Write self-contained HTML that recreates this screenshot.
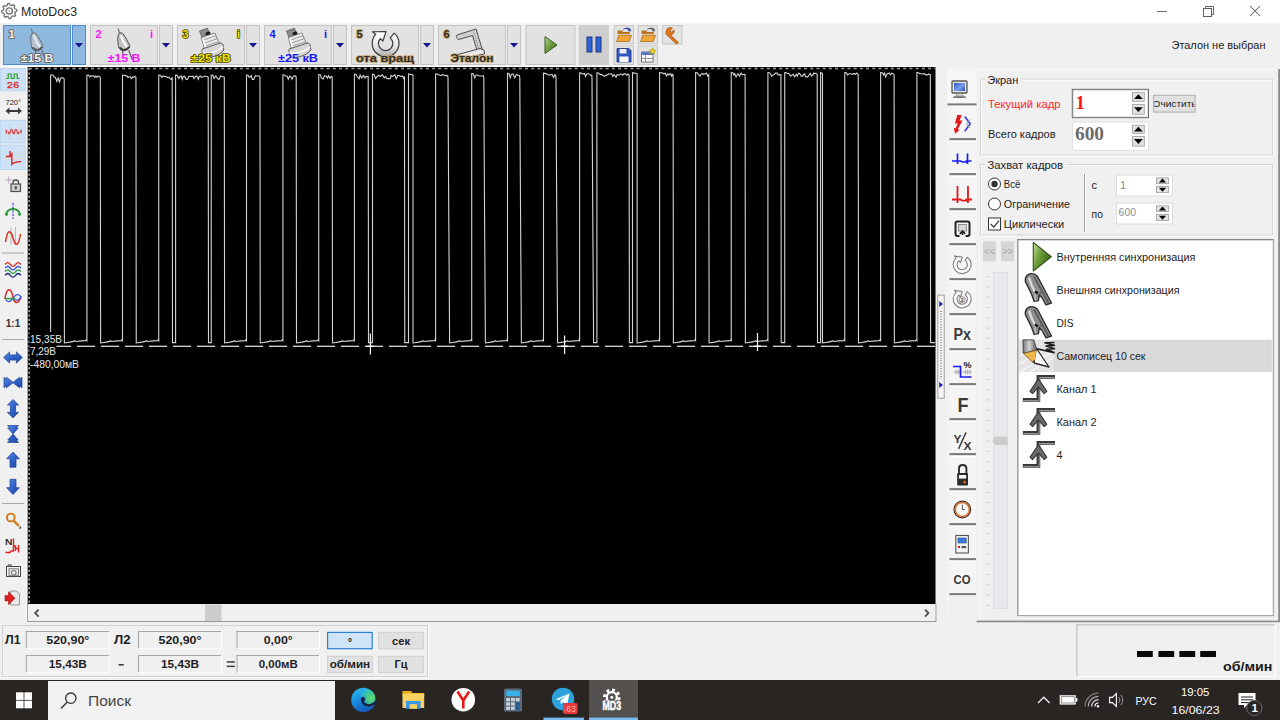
<!DOCTYPE html>
<html lang="ru"><head><meta charset="utf-8"><title>MotoDoc3</title>
<style>
html,body{margin:0;padding:0;width:1280px;height:720px;overflow:hidden;background:#f0f0f0;}
svg{display:block;position:absolute;left:0;top:0;}
text{white-space:pre;}
</style></head><body>
<svg width="1280" height="720" viewBox="0 0 1280 720">
<rect x="0" y="0" width="1280" height="23.3" fill="#ffffff" />
<path d="M16.75,9.52 L16.90,11.00 L15.09,12.15 L14.75,13.26 L15.62,15.22 L14.67,16.37 L12.58,15.91 L11.56,16.45 L10.78,18.45 L9.30,18.60 L8.15,16.79 L7.04,16.45 L5.08,17.32 L3.93,16.37 L4.39,14.28 L3.85,13.26 L1.85,12.48 L1.70,11.00 L3.51,9.85 L3.85,8.74 L2.98,6.78 L3.93,5.63 L6.02,6.09 L7.04,5.55 L7.82,3.55 L9.30,3.40 L10.45,5.21 L11.56,5.55 L13.52,4.68 L14.67,5.63 L14.21,7.72 L14.75,8.74Z" fill="#fff" stroke="#707070" stroke-width="1.3" stroke-linejoin="round"/>
<circle cx="9.3" cy="11" r="3.1" fill="#fff" stroke="#707070" stroke-width="1.3"/>
<circle cx="9.3" cy="11" r="1" fill="#b0b0b0"/>
<text x="21" y="16" font-family="'Liberation Sans', sans-serif" font-size="12" fill="#262626" textLength="56" lengthAdjust="spacingAndGlyphs" >MotoDoc3</text>
<line x1="1157" y1="11.5" x2="1167" y2="11.5" stroke="#707070" stroke-width="1" />
<rect x="1203.5" y="8.5" width="8" height="8" fill="none" stroke="#606060" stroke-width="1" />
<path d="M1205.5,8.5 V6.5 H1213.5 V14.5 H1211.5" fill="none" stroke="#606060" stroke-width="1" />
<path d="M1250,6 L1260,16 M1260,6 L1250,16" fill="none" stroke="#606060" stroke-width="1.05" />
<rect x="0" y="23.3" width="1280" height="43" fill="#f0f0f0" />
<rect x="3.5" y="25.5" width="67" height="39" fill="#8fb8de" stroke="#4d8bc9" stroke-width="1" />
<rect x="72.5" y="25.5" width="13" height="39" fill="#8fb8de" stroke="#4d8bc9" stroke-width="1" />
<path d="M75,43 h8 l-4,4.6Z" fill="#14148c" />
<g transform="translate(3,0)" opacity="0.75">
<path d="M28.3,28.7 L29.6,33.6" fill="none" stroke="#555" stroke-width="1" />
<path d="M29.3,33.3 C27.5,35 27.6,40 28.3,45.2 C28.5,47 29,48.2 29.7,48.8 C32,51.8 36.5,51.2 38.8,48 C40,47 40,46 39.5,45.2 C38.5,42.5 35.5,37 33.2,34 C32,32.6 30,32.6 29.3,33.3Z" fill="#c4c4c4" stroke="#4a4a4a" stroke-width="1" />
<path d="M31.2,36 C32,39.5 33.8,43 36.4,46.2" fill="none" stroke="#fff" stroke-width="2.2" stroke-linecap="round"/>
<path d="M29.5,47.2 C31.5,50.8 37,50.6 39.4,46.8" fill="none" stroke="#3a3a3a" stroke-width="1.8" />
<path d="M32.5,51 L33,54 M38.8,50.2 L42.2,59.4" fill="none" stroke="#555" stroke-width="1.2" />
</g>
<text x="8.5" y="37.5" font-family="'Liberation Sans', sans-serif" font-size="11" fill="#f4f4f4" font-weight="bold" stroke="#5a5a5a" stroke-width="1.6" paint-order="stroke" stroke-linejoin="round">1</text>
<text x="20.75" y="62.3" font-family="'Liberation Sans', sans-serif" font-size="11" fill="#f4f4f4" font-weight="bold" textLength="32.5" lengthAdjust="spacingAndGlyphs" stroke="#5a5a5a" stroke-width="1.6" paint-order="stroke" stroke-linejoin="round">±15 В</text>
<rect x="90.5" y="25.5" width="67" height="39" fill="#e2e2e2" stroke="#c4c4c4" stroke-width="1" />
<rect x="159.5" y="25.5" width="13" height="39" fill="#e2e2e2" stroke="#c4c4c4" stroke-width="1" />
<path d="M162,43 h8 l-4,4.6Z" fill="#14148c" />
<g transform="translate(90,0)" opacity="1.0">
<path d="M28.3,28.7 L29.6,33.6" fill="none" stroke="#555" stroke-width="1" />
<path d="M29.3,33.3 C27.5,35 27.6,40 28.3,45.2 C28.5,47 29,48.2 29.7,48.8 C32,51.8 36.5,51.2 38.8,48 C40,47 40,46 39.5,45.2 C38.5,42.5 35.5,37 33.2,34 C32,32.6 30,32.6 29.3,33.3Z" fill="#c4c4c4" stroke="#4a4a4a" stroke-width="1" />
<path d="M31.2,36 C32,39.5 33.8,43 36.4,46.2" fill="none" stroke="#fff" stroke-width="2.2" stroke-linecap="round"/>
<path d="M29.5,47.2 C31.5,50.8 37,50.6 39.4,46.8" fill="none" stroke="#3a3a3a" stroke-width="1.8" />
<path d="M32.5,51 L33,54 M38.8,50.2 L42.2,59.4" fill="none" stroke="#555" stroke-width="1.2" />
</g>
<text x="95.5" y="37.5" font-family="'Liberation Sans', sans-serif" font-size="11" fill="#ff10ff" font-weight="bold" >2</text>
<text x="150" y="37.5" font-family="'Liberation Sans', sans-serif" font-size="11" fill="#ff10ff" font-weight="bold" >i</text>
<text x="107.75" y="62.3" font-family="'Liberation Sans', sans-serif" font-size="11" fill="#ff10ff" font-weight="bold" textLength="32.5" lengthAdjust="spacingAndGlyphs" >±15 В</text>
<rect x="177.5" y="25.5" width="67" height="39" fill="#e2e2e2" stroke="#c4c4c4" stroke-width="1" />
<rect x="246.5" y="25.5" width="13" height="39" fill="#e2e2e2" stroke="#c4c4c4" stroke-width="1" />
<path d="M249,43 h8 l-4,4.6Z" fill="#14148c" />
<g transform="translate(177,0)">
<path d="M22.5,31 L30.5,28.3 L32.8,34.6 L25,37.4Z" fill="#8c8c8c" stroke="#555" stroke-width="0.8" />
<ellipse cx="31" cy="33.6" rx="2.6" ry="2" fill="#1c1c1c" transform="rotate(-18 31 33.6)"/>
<path d="M24.3,37.6 L37.8,33 L43.6,46 L28.2,51.4Z" fill="#ececec" stroke="#777" stroke-width="0.9" />
<path d="M25.3,40.4 L39,35.8 M26.4,43.4 L40.3,38.7 M27.4,46.3 L41.6,41.6 M28.2,49 L42.8,44.3" fill="none" stroke="#9a9a9a" stroke-width="1" />
<path d="M26,39 C27,43 28.4,47 30,51" fill="none" stroke="#fff" stroke-width="1.6" />
<path d="M25,51.6 C24.4,49.6 25.4,48.6 27,48.4 L43.2,43 C45,42.8 46.2,44 46.4,46 L46.8,50 C44,55 31,59.4 26.4,56.6Z" fill="#d6d6d6" stroke="#555" stroke-width="1" />
<path d="M25.4,52.6 C31,54.6 41,51.4 46.4,46.6" fill="none" stroke="#fafafa" stroke-width="1.6" />
</g>
<text x="182.5" y="37.5" font-family="'Liberation Sans', sans-serif" font-size="11" fill="#f0e000" font-weight="bold" stroke="#4a4200" stroke-width="1.6" paint-order="stroke" stroke-linejoin="round">3</text>
<text x="237" y="37.5" font-family="'Liberation Sans', sans-serif" font-size="11" fill="#f0e000" font-weight="bold" stroke="#4a4200" stroke-width="1.6" paint-order="stroke" stroke-linejoin="round">i</text>
<text x="191.0" y="62.3" font-family="'Liberation Sans', sans-serif" font-size="11" fill="#f0e000" font-weight="bold" textLength="40" lengthAdjust="spacingAndGlyphs" stroke="#4a4200" stroke-width="1.6" paint-order="stroke" stroke-linejoin="round">±25 кВ</text>
<rect x="264.5" y="25.5" width="67" height="39" fill="#e2e2e2" stroke="#c4c4c4" stroke-width="1" />
<rect x="333.5" y="25.5" width="13" height="39" fill="#e2e2e2" stroke="#c4c4c4" stroke-width="1" />
<path d="M336,43 h8 l-4,4.6Z" fill="#14148c" />
<g transform="translate(264,0)">
<path d="M22.5,31 L30.5,28.3 L32.8,34.6 L25,37.4Z" fill="#8c8c8c" stroke="#555" stroke-width="0.8" />
<ellipse cx="31" cy="33.6" rx="2.6" ry="2" fill="#1c1c1c" transform="rotate(-18 31 33.6)"/>
<path d="M24.3,37.6 L37.8,33 L43.6,46 L28.2,51.4Z" fill="#ececec" stroke="#777" stroke-width="0.9" />
<path d="M25.3,40.4 L39,35.8 M26.4,43.4 L40.3,38.7 M27.4,46.3 L41.6,41.6 M28.2,49 L42.8,44.3" fill="none" stroke="#9a9a9a" stroke-width="1" />
<path d="M26,39 C27,43 28.4,47 30,51" fill="none" stroke="#fff" stroke-width="1.6" />
<path d="M25,51.6 C24.4,49.6 25.4,48.6 27,48.4 L43.2,43 C45,42.8 46.2,44 46.4,46 L46.8,50 C44,55 31,59.4 26.4,56.6Z" fill="#d6d6d6" stroke="#555" stroke-width="1" />
<path d="M25.4,52.6 C31,54.6 41,51.4 46.4,46.6" fill="none" stroke="#fafafa" stroke-width="1.6" />
</g>
<text x="269.5" y="37.5" font-family="'Liberation Sans', sans-serif" font-size="11" fill="#1818ff" font-weight="bold" >4</text>
<text x="324" y="37.5" font-family="'Liberation Sans', sans-serif" font-size="11" fill="#1818ff" font-weight="bold" >i</text>
<text x="278.0" y="62.3" font-family="'Liberation Sans', sans-serif" font-size="11" fill="#1818ff" font-weight="bold" textLength="40" lengthAdjust="spacingAndGlyphs" >±25 кВ</text>
<rect x="351.5" y="25.5" width="67" height="39" fill="#e2e2e2" stroke="#c4c4c4" stroke-width="1" />
<rect x="420.5" y="25.5" width="13" height="39" fill="#e2e2e2" stroke="#c4c4c4" stroke-width="1" />
<path d="M423,43 h8 l-4,4.6Z" fill="#14148c" />
<linearGradient id="grot" x1="0" y1="0" x2="0" y2="1"><stop offset="0" stop-color="#ffffff"/><stop offset="0.6" stop-color="#e4e4e4"/><stop offset="1" stop-color="#a8a8a8"/></linearGradient>
<path d="M394.21,33.14 A13.4,13.4 0 1 1 375.64,34.43 L372.67,31.76 L386.01,31.61 L382.92,40.99 L380.25,38.58 A7.2,7.2 0 1 0 390.23,37.88Z" fill="url(#grot)" stroke="#3a3a3a" stroke-width="1.2" stroke-linejoin="round"/>
<text x="356.5" y="37.5" font-family="'Liberation Sans', sans-serif" font-size="11" fill="#2e2e2e" font-weight="bold" stroke="#c9a46a" stroke-width="1.6" paint-order="stroke" stroke-linejoin="round">5</text>
<text x="356.0" y="62.3" font-family="'Liberation Sans', sans-serif" font-size="11" fill="#2e2e2e" font-weight="bold" textLength="58" lengthAdjust="spacingAndGlyphs" stroke="#c9a46a" stroke-width="1.6" paint-order="stroke" stroke-linejoin="round">ота вращ</text>
<rect x="438.5" y="25.5" width="67" height="39" fill="#e2e2e2" stroke="#c4c4c4" stroke-width="1" />
<rect x="507.5" y="25.5" width="13" height="39" fill="#e2e2e2" stroke="#c4c4c4" stroke-width="1" />
<path d="M510,43 h8 l-4,4.6Z" fill="#14148c" />
<g transform="translate(438,0)">
<path d="M19,35 L38,29 L45,52 L40,53.5 L34.5,35.5 L20.5,39.5 C18,38.5 18,36 19,35Z" fill="#cfcfcf" stroke="#4a4a4a" stroke-width="1" />
<path d="M36,33 L42,52" fill="none" stroke="#777" stroke-width="1" stroke-dasharray="1 1.5"/>
<path d="M20,54.5 L42,48.5 L46,50 L46.5,54 L23,58.5Z" fill="#e8e8e8" stroke="#444" stroke-width="1" />
</g>
<text x="443.5" y="37.5" font-family="'Liberation Sans', sans-serif" font-size="11" fill="#2e2e2e" font-weight="bold" stroke="#c9a46a" stroke-width="1.6" paint-order="stroke" stroke-linejoin="round">6</text>
<text x="450.5" y="62.3" font-family="'Liberation Sans', sans-serif" font-size="11" fill="#2e2e2e" font-weight="bold" textLength="43" lengthAdjust="spacingAndGlyphs" stroke="#c9a46a" stroke-width="1.6" paint-order="stroke" stroke-linejoin="round">Эталон</text>
<rect x="526.0" y="25.5" width="49" height="39" fill="#e2e2e2" stroke="#c4c4c4" stroke-width="1" />
<defs><linearGradient id="gpl" x1="0" y1="0" x2="1" y2="1"><stop offset="0" stop-color="#b8d890"/><stop offset="0.5" stop-color="#6a9a3a"/><stop offset="1" stop-color="#3f6a1c"/></linearGradient></defs>
<path d="M545,36.5 L557,45 L545,53.5Z" fill="url(#gpl)" stroke="#3c5a20" stroke-width="1" stroke-linejoin="round"/>
<rect x="578.5" y="25" width="30.5" height="40" fill="#cfcfcf" />
<rect x="587" y="37" width="5" height="15" fill="#2f62d8" stroke="#223a80" stroke-width="1" />
<rect x="596" y="37" width="5" height="15" fill="#2f62d8" stroke="#223a80" stroke-width="1" />
<rect x="614.0" y="25.5" width="19.5" height="18.5" fill="#e2e2e2" stroke="#c8c8c8" stroke-width="1" />
<rect x="638.0" y="25.5" width="19.5" height="18.5" fill="#e2e2e2" stroke="#c8c8c8" stroke-width="1" />
<rect x="662.5" y="25.5" width="19.5" height="18.5" fill="#e2e2e2" stroke="#c8c8c8" stroke-width="1" />
<rect x="614.0" y="46.0" width="19.5" height="18.5" fill="#e2e2e2" stroke="#c8c8c8" stroke-width="1" />
<rect x="638.0" y="46.0" width="19.5" height="18.5" fill="#e2e2e2" stroke="#c8c8c8" stroke-width="1" />
<path d="M617.5,30.5 h4.5 l1.2,1.5 h6.5 v2 h-12.2Z" fill="#b87418" />
<path d="M616.7,41.5 l2,-6.2 h12.6 l-2,6.2Z" fill="#f0a838" stroke="#a86810" stroke-width="0.8" />
<path d="M622.5,29.8 c3,-2.6 6,-2.4 8,-0.6 l0,-1.6 l0.4,4 l-3.6,-0.6 l1.8,-0.8 c-1.6,-1.4 -4,-1.4 -6.6,-0.4Z" fill="#2a3f9a" />
<path d="M641.5,30.5 h4.5 l1.2,1.5 h6.5 v2 h-12.2Z" fill="#b87418" />
<path d="M640.7,41.5 l2,-6.2 h12.6 l-2,6.2Z" fill="#f0a838" stroke="#a86810" stroke-width="0.8" />
<path d="M646.5,29.8 c3,-2.6 6,-2.4 8,-0.6 l0,-1.6 l0.4,4 l-3.6,-0.6 l1.8,-0.8 c-1.6,-1.4 -4,-1.4 -6.6,-0.4Z" fill="#555" />
<path d="M666.5,30 c1,-2.5 4,-3 6,-1.8 l-2.6,2.4 l1.2,1.6 l3,-2 c0.6,2.6 -1.6,4.8 -4,4.4 l8.2,7.8 l-1.8,1.8 l-8.4,-8.2 c-2,-0.6 -2.6,-3.6 -1.6,-6Z" fill="#e07818" stroke="#9a4a08" stroke-width="0.7" />
<path d="M617,48.5 h12 l2,2 v11.5 h-14Z" fill="#2f55c0" stroke="#1a2f80" stroke-width="0.8" />
<rect x="619.5" y="49" width="7" height="4.5" fill="#e8eef8" />
<rect x="619.5" y="56.5" width="9" height="5.5" fill="#fff" />
<rect x="641.5" y="52" width="11.5" height="10" fill="#fff" stroke="#666" stroke-width="0.9" />
<rect x="641.5" y="52" width="11.5" height="3" fill="#5a78c8" />
<line x1="645.5" y1="55" x2="645.5" y2="62" stroke="#777" stroke-width="0.8" />
<line x1="641.5" y1="58.5" x2="653" y2="58.5" stroke="#777" stroke-width="0.8" />
<path d="M652.5,48 l1.2,2 l2.2,0.3 l-1.6,1.6 l0.4,2.3 l-2.2,-1.1 l-2,1.1 l0.4,-2.3 l-1.6,-1.6 l2.2,-0.3Z" fill="#f0d020" stroke="#9a8000" stroke-width="0.5" />
<rect x="0" y="66" width="936" height="1" fill="#ffffff" />
<text x="1171.5" y="49.3" font-family="'Liberation Sans', sans-serif" font-size="11" fill="#1c1c1c" textLength="94" lengthAdjust="spacingAndGlyphs" >Эталон не выбран</text>
<rect x="0" y="67" width="27" height="558" fill="#f0f0f0" />
<linearGradient id="gbl" x1="0" y1="0" x2="1" y2="1"><stop offset="0" stop-color="#5a8cf0"/><stop offset="0.5" stop-color="#2f62c8"/><stop offset="1" stop-color="#1f4aa8"/></linearGradient>
<rect x="26.3" y="67" width="0.9" height="555" fill="#ffffff" />
<rect x="0.5" y="68.5" width="25" height="22.3" fill="#cde2f6" stroke="#bcd8f2" stroke-width="1" />
<rect x="0.5" y="120.3" width="25" height="22.6" fill="#cde2f6" stroke="#bcd8f2" stroke-width="1" />
<rect x="0.5" y="145.1" width="25" height="24.4" fill="#cde2f6" stroke="#bcd8f2" stroke-width="1" />
<rect x="2" y="252.5" width="22" height="1" fill="#a8a8a8" />
<rect x="2" y="339" width="22" height="1" fill="#a8a8a8" />
<rect x="2" y="503" width="22" height="1" fill="#a8a8a8" />
<path d="M6,78.5 h2.2 v-4.5 h3 v4.5 h3 v-4.5 h3 v4.5 h2.4" fill="none" stroke="#28a028" stroke-width="1.2" />
<text x="6.8" y="87.6" font-family="'Liberation Mono', monospace" font-size="9.5" fill="#e02828" textLength="12.5" lengthAdjust="spacingAndGlyphs" stroke="#e02828" stroke-width="0.35">26</text>
<text x="5.5" y="105.3" font-family="'Liberation Sans', sans-serif" font-size="8" fill="#222" textLength="15.5" lengthAdjust="spacingAndGlyphs" >720°</text>
<path d="M5.5,111 l4,-3.6 v2.6 h8.4 v-2.6 l4,3.6 l-4,3.6 v-2.6 h-8.4 v2.6Z" fill="#3a3a3a" />
<line x1="9.5" y1="124" x2="9.5" y2="140" stroke="#d8d0d0" stroke-width="1" />
<line x1="18" y1="124" x2="18" y2="140" stroke="#d8d0d0" stroke-width="1" />
<path d="M6.3,129.5 v4 M8.2,131.5 c0.5,3 1.7,3 2.2,0 c0.5,-3 1.7,-3 2.2,0 c0.5,3 1.7,3 2.2,0 c0.5,-3 1.7,-3 2.2,0 c0.5,3 1.7,3 2.2,0 M21,129.5 v4" fill="none" stroke="#e03030" stroke-width="1.2" />
<line x1="17.5" y1="151" x2="17.5" y2="167" stroke="#f0d8c0" stroke-width="1" />
<line x1="5" y1="158.5" x2="23" y2="158.5" stroke="#f0d8c0" stroke-width="1" />
<path d="M6,156.5 h4 v-5.5 M10,156.5 l1.8,-2.5 v10.2 c1.5,-1.6 4,-2.4 9.5,-2.6" fill="none" stroke="#e02020" stroke-width="1.4" />
<path d="M8.8,176.5 v7 M5.3,180 h7" fill="none" stroke="#c496c4" stroke-width="0.9" />
<rect x="11" y="184" width="9.5" height="7.5" fill="#d0d0d0" stroke="#505050" stroke-width="1.2" />
<path d="M13,184 v-1.6 c0,-3.2 5.5,-3.2 5.5,0 v1.6" fill="none" stroke="#505050" stroke-width="1.3" />
<rect x="14.8" y="186.3" width="2" height="3" fill="#444" />
<path d="M6,215 c1.5,-8 12.5,-8 14,0" fill="none" stroke="#2a9a3a" stroke-width="2" />
<path d="M4.8,213 l1.2,3.4 l2.6,-2.2Z M21.2,213 l-1.2,3.4 l-2.6,-2.2Z" fill="#2a9a3a" />
<line x1="13" y1="203" x2="13" y2="219" stroke="#2a3ac0" stroke-width="1.1" stroke-dasharray="2.2 1.4"/>
<line x1="11" y1="227" x2="11" y2="245" stroke="#b8b8b8" stroke-width="1" />
<line x1="15.5" y1="227" x2="15.5" y2="245" stroke="#b8b8b8" stroke-width="1" />
<path d="M5.5,242 c2,-13 5,-13 7.5,-4 c2.5,9 5.5,9 7.5,-4" fill="none" stroke="#e03020" stroke-width="1.5" />
<path d="M5,264.5 c2,-2.4 3.5,-2.4 5.3,0 c1.8,2.4 3.5,2.4 5.3,0 c1.8,-2.4 3.5,-2.4 5.3,0" fill="none" stroke="#e03030" stroke-width="1.3" />
<path d="M5,268.1 c2,-2.4 3.5,-2.4 5.3,0 c1.8,2.4 3.5,2.4 5.3,0 c1.8,-2.4 3.5,-2.4 5.3,0" fill="none" stroke="#3050e0" stroke-width="1.3" />
<path d="M5,271.7 c2,-2.4 3.5,-2.4 5.3,0 c1.8,2.4 3.5,2.4 5.3,0 c1.8,-2.4 3.5,-2.4 5.3,0" fill="none" stroke="#2a9a3a" stroke-width="1.3" />
<path d="M5,275.3 c2,-2.4 3.5,-2.4 5.3,0 c1.8,2.4 3.5,2.4 5.3,0 c1.8,-2.4 3.5,-2.4 5.3,0" fill="none" stroke="#1a2a80" stroke-width="1.3" />
<path d="M5,299 C6.5,287 11,287 13,297 C14.5,304.5 19,304.5 21,296" fill="none" stroke="#e02828" stroke-width="1.5" />
<path d="M5.5,299.5 C9,304 12,300 14,297 C16,294 19,293.5 21,297 C19.5,300.5 16,301 14,299" fill="none" stroke="#3050e0" stroke-width="1.2" />
<line x1="5.5" y1="298.6" x2="15" y2="298.6" stroke="#2a9a3a" stroke-width="1.5" />
<text x="5.8" y="327.3" font-family="'Liberation Sans', sans-serif" font-size="10.5" fill="#333" font-weight="bold" textLength="14.5" lengthAdjust="spacingAndGlyphs" >1:1</text>
<path d="M3.6,357.5 l6,-5.6 v3 h6.8 v-3 l6,5.6 l-6,5.6 v-3 h-6.8 v3Z" fill="url(#gbl)" stroke="#1d3f8c" stroke-width="0.7" />
<path d="M4,352.5 l2.5,2.2 v-2.2 l6.5,5 l6.5,-5 v2.2 l2.5,-2.2 v10.5 l-2.5,-2.2 v2.2 l-6.5,-5 l-6.5,5 v-2.2 l-2.5,2.2Z" fill="url(#gbl)" stroke="#1d3f8c" stroke-width="0.7" transform="translate(0,24.8)"/>
<path d="M13,399.5 l5.6,5.6 h-3 v7.2 h3 l-5.6,5.6 l-5.6,-5.6 h3 v-7.2 h-3Z" fill="url(#gbl)" stroke="#1d3f8c" stroke-width="0.7" />
<path d="M7.5,425.5 l2.4,2.4 h-2.2 l5.3,6 l5.3,-6 h-2.2 l2.4,-2.4 h-11Z M7.5,442.5 l2.4,-2.4 h-2.2 l5.3,-6 l5.3,6 h-2.2 l2.4,2.4 h-11Z" fill="url(#gbl)" stroke="#1d3f8c" stroke-width="0.7" />
<path d="M13,452 l6.4,6.8 h-3.4 v8.4 h-6 v-8.4 h-3.4Z" fill="url(#gbl)" stroke="#1d3f8c" stroke-width="0.7" />
<path d="M13,494.5 l6.4,-6.8 h-3.4 v-8.4 h-6 v8.4 h-3.4Z" fill="url(#gbl)" stroke="#1d3f8c" stroke-width="0.7" />
<circle cx="10.8" cy="517.5" r="3.9" fill="none" stroke="#d07818" stroke-width="1.9"/>
<line x1="13.8" y1="520.8" x2="19" y2="526" stroke="#d07818" stroke-width="2.4" />
<path d="M18.5,528.5 l2.6,-2.6 v2.6Z" fill="#333" />
<text x="5" y="544.5" font-family="'Liberation Sans', sans-serif" font-size="9.5" fill="#333" font-weight="bold" textLength="7.5" lengthAdjust="spacingAndGlyphs" >N</text>
<path d="M5.5,552.5 h4.5 l1,-1.5 h2.5 v-12.5 M13.5,546 h2 v5 M15.5,548.5 h3 v-3.5 M18.5,548.5 v4" fill="none" stroke="#e02020" stroke-width="1.4" />
<rect x="6.5" y="566.5" width="14" height="10" fill="#f4f4f4" stroke="#444" stroke-width="1" />
<path d="M8,566.5 v-1.6 h3.2 v1.6" fill="none" stroke="#444" stroke-width="1" />
<rect x="9" y="568.8" width="9.5" height="7" fill="#e0e0e0" stroke="#666" stroke-width="0.8" />
<circle cx="13.8" cy="572.8" r="2.3" fill="#f0f0f0" stroke="#555" stroke-width="0.9"/>
<path d="M10.5,591 h6 l3,3 v11 h-9Z" fill="#e8e8e8" stroke="#909090" stroke-width="0.9" />
<path d="M5,595.5 h3.5 v-3.8 l6.5,6.5 l-6.5,6.5 v-3.8 h-3.5Z" fill="#e02020" stroke="#a01010" stroke-width="0.6" />
<rect x="28" y="67" width="907.5" height="537" fill="#000" />
<line x1="29" y1="68.5" x2="935.5" y2="68.5" stroke="#9a9a9a" stroke-width="1.7" stroke-dasharray="3.1 3.1"/>
<line x1="29.2" y1="68" x2="29.2" y2="604" stroke="#a8a8a8" stroke-width="1.6" stroke-dasharray="2.2 2.2"/>
<path d="M30.00,340.80 L50.60,340.80 L50.60,75.00 L53.00,75.00 L54.00,77.00 L55.50,77.50 L56.80,81.50 L58.20,78.00 L59.40,82.00 L60.80,78.00 L62.50,77.50 L64.20,79.00 L64.40,342.90 L65.90,342.70 L70.03,342.10 L73.40,341.40 L74.53,340.70 L75.65,341.50 L81.28,340.90 L85.70,340.70 L86.30,339.70 L86.90,340.50 L86.90,75.00 L88.50,75.20 L89.69,76.80 L90.95,75.60 L91.91,76.20 L93.14,75.60 L94.86,77.40 L95.79,76.00 L97.07,77.40 L98.05,76.00 L99.00,76.20 L100.30,77.20 L100.60,342.90 L102.10,342.70 L106.07,342.10 L109.36,341.40 L110.45,340.70 L111.55,341.50 L117.03,340.90 L121.30,340.70 L121.90,339.70 L122.50,340.50 L122.50,75.00 L124.10,75.20 L125.57,75.60 L126.99,76.00 L127.93,77.40 L128.87,76.80 L130.03,76.80 L131.42,78.60 L132.83,76.80 L133.82,77.40 L135.05,76.20 L135.95,77.20 L136.25,342.90 L137.75,342.70 L141.88,342.10 L145.25,341.40 L146.38,340.70 L147.50,341.50 L153.12,340.90 L157.55,340.70 L158.15,339.70 L158.75,340.50 L158.75,75.00 L160.35,75.20 L161.76,77.40 L163.10,76.00 L164.70,76.50 L166.13,76.50 L167.36,77.40 L168.97,77.40 L169.95,78.60 L171.32,79.40 L172.20,77.20 L172.50,342.60 L175.60,342.60 L175.60,75.00 L177.20,75.20 L178.76,78.60 L180.20,76.20 L181.21,76.00 L182.26,79.40 L183.30,76.50 L184.58,76.20 L186.16,79.40 L187.37,79.40 L188.80,76.50 L189.77,76.20 L191.52,76.50 L193.04,76.20 L194.00,78.60 L195.48,76.50 L196.64,76.00 L198.34,79.40 L199.26,76.50 L200.48,76.20 L201.82,77.40 L203.41,76.80 L204.98,76.00 L206.23,76.50 L207.20,76.50 L208.20,77.20 L208.50,342.60 L211.25,342.60 L211.25,75.00 L212.85,75.20 L214.11,78.60 L215.81,76.00 L217.48,78.60 L219.02,79.40 L220.53,76.00 L222.30,76.80 L223.27,76.80 L224.30,77.20 L224.60,342.90 L226.10,342.70 L230.07,342.10 L233.36,341.40 L234.45,340.70 L235.55,341.50 L241.03,340.90 L245.30,340.70 L245.90,339.70 L246.50,340.50 L246.50,75.00 L248.10,75.20 L249.21,77.40 L250.12,76.80 L251.26,75.60 L252.29,79.40 L253.74,79.40 L255.49,75.60 L256.80,76.00 L258.06,76.00 L259.06,76.00 L259.95,77.20 L260.25,342.90 L261.75,342.70 L265.91,342.10 L269.31,341.40 L270.44,340.70 L271.57,341.50 L277.24,340.90 L281.70,340.70 L282.30,339.70 L282.90,340.50 L282.90,74.79 L284.50,74.99 L285.46,75.99 L287.24,76.29 L288.29,79.19 L289.73,75.99 L290.63,76.59 L292.01,79.19 L293.46,75.99 L295.15,75.79 L296.20,76.99 L296.50,342.90 L298.00,342.70 L302.06,342.10 L305.40,341.40 L306.51,340.70 L307.62,341.50 L313.19,340.90 L317.55,340.70 L318.15,339.70 L318.75,340.50 L318.75,74.57 L320.35,74.77 L321.38,78.17 L323.14,78.97 L324.47,75.77 L326.13,76.07 L327.47,78.17 L328.44,75.77 L330.02,78.17 L331.35,76.37 L332.20,76.77 L332.50,342.90 L334.00,342.70 L337.98,342.10 L341.26,341.40 L342.36,340.70 L343.45,341.50 L348.92,340.90 L353.20,340.70 L353.80,339.70 L354.40,340.50 L354.40,74.35 L356.00,74.55 L357.36,76.75 L359.12,78.75 L360.15,74.95 L361.73,77.95 L363.52,75.55 L365.04,77.95 L366.41,76.15 L367.63,76.75 L368.20,76.55 L368.50,342.60 L372.50,342.60 L372.50,74.23 L374.10,74.43 L375.48,78.63 L376.95,76.63 L378.58,75.23 L380.14,76.63 L381.22,75.73 L382.44,74.83 L384.23,77.83 L385.56,76.63 L387.08,78.63 L388.38,78.63 L390.14,78.63 L391.12,75.43 L392.22,76.63 L393.42,75.73 L394.89,74.83 L396.22,78.63 L397.84,75.43 L399.49,75.43 L401.21,76.63 L402.54,76.03 L403.83,78.63 L404.45,76.43 L404.75,342.60 L408.50,342.60 L408.50,74.01 L413.00,75.01 L413.00,342.90 L414.50,342.70 L418.65,342.10 L422.04,341.40 L423.17,340.70 L424.30,341.50 L429.95,340.90 L434.40,340.70 L435.00,339.70 L435.60,340.50 L435.60,73.84 L437.20,74.04 L438.18,74.84 L439.49,75.04 L441.05,75.64 L442.84,74.44 L443.88,75.34 L445.50,75.64 L446.95,75.34 L447.70,76.04 L448.00,78.00 L448.70,205.00 L449.40,310.00 L449.60,342.90 L451.10,342.70 L455.12,342.10 L458.44,341.40 L459.55,340.70 L460.65,341.50 L466.18,340.90 L470.50,340.70 L471.10,339.70 L471.70,340.50 L471.70,73.61 L473.30,73.81 L474.79,78.01 L475.83,75.41 L476.75,74.81 L478.13,75.41 L479.42,76.01 L481.06,76.01 L481.98,76.01 L483.50,75.81 L483.80,78.00 L484.50,205.00 L485.20,310.00 L485.40,342.90 L486.90,342.70 L490.92,342.10 L494.24,341.40 L495.34,340.70 L496.45,341.50 L501.98,340.90 L506.30,340.70 L506.90,339.70 L507.50,340.50 L507.50,73.39 L509.10,73.59 L510.22,77.79 L511.35,74.39 L513.00,73.99 L514.72,77.79 L516.43,74.39 L518.07,75.19 L519.50,75.59 L519.80,78.00 L520.50,205.00 L521.20,310.00 L521.40,342.90 L522.90,342.70 L526.92,342.10 L530.24,341.40 L531.35,340.70 L532.45,341.50 L537.98,340.90 L542.30,340.70 L542.90,339.70 L543.50,340.50 L543.50,73.17 L545.10,73.37 L546.47,73.77 L548.16,74.97 L549.60,74.97 L550.66,74.67 L552.12,74.37 L553.52,77.57 L555.03,74.67 L555.70,75.37 L556.00,78.00 L556.70,205.00 L557.40,310.00 L557.60,342.90 L559.10,342.70 L563.10,342.10 L566.40,341.40 L567.50,340.70 L568.60,341.50 L574.10,340.90 L578.40,340.70 L579.00,339.70 L579.60,340.50 L579.60,72.94 L581.20,73.14 L582.81,74.14 L584.50,73.54 L585.62,76.54 L586.56,74.14 L587.92,73.54 L589.50,74.14 L590.80,75.34 L591.70,75.14 L592.00,78.00 L592.70,205.00 L593.40,310.00 L593.60,342.60 L596.90,342.60 L596.90,72.83 L598.50,73.03 L600.02,74.33 L601.38,74.33 L602.74,75.23 L604.27,76.43 L606.00,75.23 L607.65,74.63 L608.93,73.83 L610.23,74.03 L611.73,73.83 L612.70,76.43 L614.30,74.63 L616.05,77.23 L617.08,74.63 L618.85,75.23 L620.42,74.03 L621.68,74.33 L622.72,75.23 L623.77,73.83 L625.56,73.83 L626.77,75.23 L627.99,74.03 L629.10,75.03 L629.40,342.60 L632.50,342.60 L632.50,72.61 L637.10,73.61 L637.10,342.90 L638.60,342.70 L642.73,342.10 L646.10,341.40 L647.23,340.70 L648.35,341.50 L653.98,340.90 L658.40,340.70 L659.00,339.70 L659.60,340.50 L659.60,72.50 L661.20,72.70 L662.75,73.10 L663.95,74.00 L665.25,73.10 L666.50,76.10 L667.86,73.70 L668.86,74.90 L670.63,73.70 L671.61,76.10 L672.54,74.30 L673.10,74.70 L673.40,342.90 L674.90,342.70 L678.95,342.10 L682.28,341.40 L683.39,340.70 L684.50,341.50 L690.05,340.90 L694.40,340.70 L695.00,339.70 L695.60,340.50 L695.60,72.50 L697.20,72.70 L698.34,74.30 L699.98,76.10 L701.25,74.00 L702.78,73.70 L703.93,74.30 L705.21,73.70 L706.35,73.10 L707.82,76.10 L708.80,74.70 L709.10,342.90 L710.60,342.70 L714.64,342.10 L717.96,341.40 L719.07,340.70 L720.17,341.50 L725.71,340.90 L730.05,340.70 L730.65,339.70 L731.25,340.50 L731.25,72.50 L732.85,72.70 L733.83,74.90 L734.79,73.70 L736.09,76.90 L737.89,73.50 L739.62,76.10 L741.08,73.10 L742.46,74.90 L744.20,74.30 L745.10,74.70 L745.40,342.90 L746.90,342.70 L751.02,342.10 L754.40,341.40 L755.52,340.70 L756.65,341.50 L762.27,340.90 L766.70,340.70 L767.30,339.70 L767.90,340.50 L767.90,72.50 L769.50,72.70 L770.64,74.30 L771.72,76.10 L773.18,74.90 L774.34,74.30 L775.49,73.10 L777.28,73.10 L778.20,74.90 L779.56,74.90 L780.95,74.70 L781.25,342.60 L784.75,342.60 L784.75,72.50 L786.35,72.70 L787.35,73.50 L788.84,73.50 L790.61,76.10 L792.13,74.90 L793.34,74.30 L794.60,76.90 L796.39,74.30 L797.30,76.10 L798.59,73.10 L799.56,73.50 L801.25,76.10 L802.68,76.10 L803.62,74.30 L804.67,74.00 L805.57,76.90 L807.34,76.90 L808.46,76.10 L809.55,74.30 L810.45,73.50 L811.43,76.10 L812.78,74.90 L813.90,73.10 L814.89,73.70 L815.92,73.10 L817.20,74.70 L817.50,342.60 L820.60,342.60 L820.60,72.50 L822.50,73.50 L822.50,342.90 L824.00,342.70 L828.06,342.10 L831.40,341.40 L832.51,340.70 L833.62,341.50 L839.19,340.90 L843.55,340.70 L844.15,339.70 L844.75,340.50 L844.75,72.50 L846.35,72.70 L847.52,74.90 L848.50,74.30 L849.99,73.50 L851.58,74.00 L852.61,74.30 L853.55,73.50 L855.11,74.30 L856.83,73.10 L858.20,74.70 L858.50,342.90 L860.00,342.70 L864.02,342.10 L867.34,341.40 L868.45,340.70 L869.55,341.50 L875.08,340.90 L879.40,340.70 L880.00,339.70 L880.60,340.50 L880.60,72.50 L882.20,72.70 L883.63,74.90 L884.60,73.10 L885.62,76.90 L887.39,73.50 L889.04,73.10 L890.50,74.90 L891.84,73.10 L893.15,73.70 L894.10,74.70 L894.40,342.90 L895.90,342.70 L900.02,342.10 L903.40,341.40 L904.52,340.70 L905.65,341.50 L911.27,340.90 L915.70,340.70 L916.30,339.70 L916.90,340.50 L916.90,72.50 L918.50,72.70 L920.07,73.70 L921.57,73.70 L923.14,74.00 L924.26,73.70 L925.93,74.90 L927.48,74.90 L928.59,74.00 L930.30,74.70 L930.60,342.60 L935.00,342.60" fill="none" stroke="#d4d4d4" stroke-width="1.1" stroke-linejoin="miter"/>
<line x1="53.0" y1="346.3" x2="71.0" y2="346.3" stroke="#d8d8d8" stroke-width="1.3" />
<line x1="77.0" y1="346.3" x2="95.0" y2="346.3" stroke="#d8d8d8" stroke-width="1.3" />
<line x1="101.0" y1="346.3" x2="119.0" y2="346.3" stroke="#d8d8d8" stroke-width="1.3" />
<line x1="125.0" y1="346.3" x2="143.0" y2="346.3" stroke="#d8d8d8" stroke-width="1.3" />
<line x1="149.0" y1="346.3" x2="167.0" y2="346.3" stroke="#d8d8d8" stroke-width="1.3" />
<line x1="173.0" y1="346.3" x2="191.0" y2="346.3" stroke="#d8d8d8" stroke-width="1.3" />
<line x1="197.0" y1="346.3" x2="215.0" y2="346.3" stroke="#d8d8d8" stroke-width="1.3" />
<line x1="221.0" y1="346.3" x2="239.0" y2="346.3" stroke="#d8d8d8" stroke-width="1.3" />
<line x1="245.0" y1="346.3" x2="263.0" y2="346.3" stroke="#d8d8d8" stroke-width="1.3" />
<line x1="269.0" y1="346.3" x2="287.0" y2="346.3" stroke="#d8d8d8" stroke-width="1.3" />
<line x1="293.0" y1="346.3" x2="311.0" y2="346.3" stroke="#d8d8d8" stroke-width="1.3" />
<line x1="317.0" y1="346.3" x2="335.0" y2="346.3" stroke="#d8d8d8" stroke-width="1.3" />
<line x1="341.0" y1="346.3" x2="359.0" y2="346.3" stroke="#d8d8d8" stroke-width="1.3" />
<line x1="365.0" y1="346.3" x2="383.0" y2="346.3" stroke="#d8d8d8" stroke-width="1.3" />
<line x1="389.0" y1="346.3" x2="407.0" y2="346.3" stroke="#d8d8d8" stroke-width="1.3" />
<line x1="413.0" y1="346.3" x2="431.0" y2="346.3" stroke="#d8d8d8" stroke-width="1.3" />
<line x1="437.0" y1="346.3" x2="455.0" y2="346.3" stroke="#d8d8d8" stroke-width="1.3" />
<line x1="461.0" y1="346.3" x2="479.0" y2="346.3" stroke="#d8d8d8" stroke-width="1.3" />
<line x1="485.0" y1="346.3" x2="503.0" y2="346.3" stroke="#d8d8d8" stroke-width="1.3" />
<line x1="509.0" y1="346.3" x2="527.0" y2="346.3" stroke="#d8d8d8" stroke-width="1.3" />
<line x1="533.0" y1="346.3" x2="551.0" y2="346.3" stroke="#d8d8d8" stroke-width="1.3" />
<line x1="557.0" y1="346.3" x2="575.0" y2="346.3" stroke="#d8d8d8" stroke-width="1.3" />
<line x1="581.0" y1="346.3" x2="599.0" y2="346.3" stroke="#d8d8d8" stroke-width="1.3" />
<line x1="605.0" y1="346.3" x2="623.0" y2="346.3" stroke="#d8d8d8" stroke-width="1.3" />
<line x1="629.0" y1="346.3" x2="647.0" y2="346.3" stroke="#d8d8d8" stroke-width="1.3" />
<line x1="653.0" y1="346.3" x2="671.0" y2="346.3" stroke="#d8d8d8" stroke-width="1.3" />
<line x1="677.0" y1="346.3" x2="695.0" y2="346.3" stroke="#d8d8d8" stroke-width="1.3" />
<line x1="701.0" y1="346.3" x2="719.0" y2="346.3" stroke="#d8d8d8" stroke-width="1.3" />
<line x1="725.0" y1="346.3" x2="743.0" y2="346.3" stroke="#d8d8d8" stroke-width="1.3" />
<line x1="749.0" y1="346.3" x2="767.0" y2="346.3" stroke="#d8d8d8" stroke-width="1.3" />
<line x1="773.0" y1="346.3" x2="791.0" y2="346.3" stroke="#d8d8d8" stroke-width="1.3" />
<line x1="797.0" y1="346.3" x2="815.0" y2="346.3" stroke="#d8d8d8" stroke-width="1.3" />
<line x1="821.0" y1="346.3" x2="839.0" y2="346.3" stroke="#d8d8d8" stroke-width="1.3" />
<line x1="845.0" y1="346.3" x2="863.0" y2="346.3" stroke="#d8d8d8" stroke-width="1.3" />
<line x1="869.0" y1="346.3" x2="887.0" y2="346.3" stroke="#d8d8d8" stroke-width="1.3" />
<line x1="893.0" y1="346.3" x2="911.0" y2="346.3" stroke="#d8d8d8" stroke-width="1.3" />
<line x1="917.0" y1="346.3" x2="935.0" y2="346.3" stroke="#d8d8d8" stroke-width="1.3" />
<line x1="370.4" y1="333.5" x2="370.4" y2="354.5" stroke="#fff" stroke-width="1.2" />
<line x1="366.9" y1="346.3" x2="373.9" y2="346.3" stroke="#fff" stroke-width="1.4" />
<line x1="564.6" y1="335.5" x2="564.6" y2="354" stroke="#fff" stroke-width="1.2" />
<line x1="561.1" y1="346.3" x2="568.1" y2="346.3" stroke="#fff" stroke-width="1.4" />
<line x1="757.5" y1="333" x2="757.5" y2="351" stroke="#fff" stroke-width="1.2" />
<line x1="754.0" y1="346.3" x2="761.0" y2="346.3" stroke="#fff" stroke-width="1.4" />
<rect x="29.5" y="332" width="32" height="12" fill="#000" />
<text x="30" y="342.5" font-family="'Liberation Sans', sans-serif" font-size="11" fill="#e8e8e8" textLength="32" lengthAdjust="spacingAndGlyphs" >15,35В</text>
<rect x="29.5" y="345" width="27" height="11" fill="#000" />
<text x="30" y="355" font-family="'Liberation Sans', sans-serif" font-size="11" fill="#e8e8e8" textLength="26" lengthAdjust="spacingAndGlyphs" >7,29В</text>
<text x="30" y="367.5" font-family="'Liberation Sans', sans-serif" font-size="11" fill="#e8e8e8" textLength="49" lengthAdjust="spacingAndGlyphs" >-480,00мВ</text>
<rect x="28" y="604" width="907.5" height="17.5" fill="#f0f0f0" />
<rect x="205" y="604.5" width="16.5" height="16.5" fill="#cdcdcd" />
<path d="M38.6,609.6 L35.2,613.1 L38.6,616.6" fill="none" stroke="#505050" stroke-width="1.9" />
<path d="M925,609.6 L928.4,613.1 L925,616.6" fill="none" stroke="#505050" stroke-width="1.9" />
<rect x="28" y="621" width="908" height="1" fill="#9a9a9a" />
<rect x="27" y="67" width="1" height="555" fill="#a0a0a0" />
<rect x="935.5" y="604" width="1" height="18" fill="#a0a0a0" />
<rect x="947" y="69" width="333" height="553" fill="#f0f0f0" />
<rect x="947" y="69" width="333" height="1" fill="#f8f8f8" />
<rect x="947" y="69" width="1" height="553" fill="#f6f6f6" />
<rect x="976.5" y="620.6" width="303.5" height="1.9" fill="#8a8a8a" />
<rect x="1278.2" y="69" width="1.8" height="553" fill="#8a8a8a" />
<rect x="937.8" y="295.2" width="6.4" height="103" fill="#f6f6f6" stroke="#a0a0a0" stroke-width="1" />
<line x1="941" y1="311" x2="941" y2="379" stroke="#444" stroke-width="1" stroke-dasharray="1 1.6"/>
<path d="M939.3,301 l3.6,3 l-3.6,3Z" fill="#1a1aa0" />
<path d="M939.3,382 l3.6,3 l-3.6,3Z" fill="#1a1aa0" />
<rect x="947.5" y="70" width="29" height="34" fill="#f6f6f6" />
<rect x="947.5" y="103.4" width="29" height="2" fill="#7a7a7a" />
<rect x="949.5" y="106.0" width="26.5" height="32.5" fill="#f5f5f5" />
<rect x="949.5" y="138.1" width="26.5" height="2" fill="#7a7a7a" />
<rect x="949.5" y="106.0" width="26.5" height="1" fill="#fdfdfd" />
<rect x="949.5" y="141.0" width="26.5" height="32.5" fill="#f5f5f5" />
<rect x="949.5" y="173.1" width="26.5" height="2" fill="#7a7a7a" />
<rect x="949.5" y="141.0" width="26.5" height="1" fill="#fdfdfd" />
<rect x="949.5" y="176.0" width="26.5" height="32.5" fill="#f5f5f5" />
<rect x="949.5" y="208.1" width="26.5" height="2" fill="#7a7a7a" />
<rect x="949.5" y="176.0" width="26.5" height="1" fill="#fdfdfd" />
<rect x="949.5" y="211.0" width="26.5" height="32.5" fill="#f5f5f5" />
<rect x="949.5" y="243.1" width="26.5" height="2" fill="#7a7a7a" />
<rect x="949.5" y="211.0" width="26.5" height="1" fill="#fdfdfd" />
<rect x="949.5" y="246.0" width="26.5" height="32.5" fill="#f5f5f5" />
<rect x="949.5" y="278.1" width="26.5" height="2" fill="#7a7a7a" />
<rect x="949.5" y="246.0" width="26.5" height="1" fill="#fdfdfd" />
<rect x="949.5" y="281.0" width="26.5" height="32.5" fill="#f5f5f5" />
<rect x="949.5" y="313.1" width="26.5" height="2" fill="#7a7a7a" />
<rect x="949.5" y="281.0" width="26.5" height="1" fill="#fdfdfd" />
<rect x="949.5" y="316.0" width="26.5" height="32.5" fill="#f5f5f5" />
<rect x="949.5" y="348.1" width="26.5" height="2" fill="#7a7a7a" />
<rect x="949.5" y="316.0" width="26.5" height="1" fill="#fdfdfd" />
<rect x="949.5" y="351.0" width="26.5" height="32.5" fill="#f5f5f5" />
<rect x="949.5" y="383.1" width="26.5" height="2" fill="#7a7a7a" />
<rect x="949.5" y="351.0" width="26.5" height="1" fill="#fdfdfd" />
<rect x="949.5" y="386.0" width="26.5" height="32.5" fill="#f5f5f5" />
<rect x="949.5" y="418.1" width="26.5" height="2" fill="#7a7a7a" />
<rect x="949.5" y="386.0" width="26.5" height="1" fill="#fdfdfd" />
<rect x="949.5" y="421.0" width="26.5" height="32.5" fill="#f5f5f5" />
<rect x="949.5" y="453.1" width="26.5" height="2" fill="#7a7a7a" />
<rect x="949.5" y="421.0" width="26.5" height="1" fill="#fdfdfd" />
<rect x="949.5" y="456.0" width="26.5" height="32.5" fill="#f5f5f5" />
<rect x="949.5" y="488.1" width="26.5" height="2" fill="#7a7a7a" />
<rect x="949.5" y="456.0" width="26.5" height="1" fill="#fdfdfd" />
<rect x="949.5" y="491.0" width="26.5" height="32.5" fill="#f5f5f5" />
<rect x="949.5" y="523.1" width="26.5" height="2" fill="#7a7a7a" />
<rect x="949.5" y="491.0" width="26.5" height="1" fill="#fdfdfd" />
<rect x="949.5" y="526.0" width="26.5" height="32.5" fill="#f5f5f5" />
<rect x="949.5" y="558.1" width="26.5" height="2" fill="#7a7a7a" />
<rect x="949.5" y="526.0" width="26.5" height="1" fill="#fdfdfd" />
<rect x="949.5" y="561.0" width="26.5" height="32.5" fill="#f5f5f5" />
<rect x="949.5" y="593.1" width="26.5" height="2" fill="#7a7a7a" />
<rect x="949.5" y="561.0" width="26.5" height="1" fill="#fdfdfd" />
<rect x="952" y="81" width="15" height="12" fill="#e4e4e4" stroke="#555" stroke-width="1.3" rx="1" />
<linearGradient id="gmon" x1="0" y1="0" x2="1" y2="1"><stop offset="0" stop-color="#2a55c0"/><stop offset="0.55" stop-color="#7aa0ec"/><stop offset="1" stop-color="#2a50b0"/></linearGradient>
<rect x="954" y="83" width="11" height="8" fill="url(#gmon)" />
<path d="M957,93.6 h5 l1.2,2.6 h-7.4Z" fill="#d8d8d8" stroke="#666" stroke-width="0.6" />
<rect x="953.3" y="96.4" width="12.4" height="1.5" fill="#666" />
<path d="M957.2,115 l4.6,0 l-2.2,5.6 l2.8,0 l-4.6,8.6 l1.9,0.5 l-4.6,4 l-1.3,-5.9 l1.7,0.7 l2.4,-5 l-2.9,0Z" fill="#e01818" />
<path d="M964.8,116.5 l5.4,7.2 l-5.4,7.6" fill="none" stroke="#3838f0" stroke-width="1.6" />
<path d="M969.8,119.5 l-3.3,4.2 l3.3,4.6" fill="none" stroke="#8a98b8" stroke-width="1" />
<path d="M952,161 h4 M957.5,153.5 v10.5 M955.5,161 h5 l2,1 h4.5 M967.5,153.5 v10.5 M965.5,161 h6" fill="none" stroke="#1a1af0" stroke-width="1.7" />
<path d="M952,199.5 h4 M957.5,186 v17 M955.5,199.5 h5 l2,1.2 h5 M968,186 v17 M965.5,199.5 h6.5" fill="none" stroke="#e01a1a" stroke-width="1.8" />
<rect x="955.5" y="221.5" width="14" height="14.5" fill="none" stroke="#222" stroke-width="2" rx="2" />
<rect x="958.5" y="224.5" width="8" height="6.5" fill="#d8d8d8" stroke="#777" stroke-width="0.8" />
<path d="M962.5,231 v5 M959.8,233.8 l2.7,-2.6 l2.7,2.6" fill="none" stroke="#222" stroke-width="1.6" />
<rect x="959.5" y="235" width="6" height="2.2" fill="#f5f5f5" />
<path d="M967.36,257.23 A9.0,9.0 0 1 1 956.18,257.91 L954.44,255.98 L962.20,257.10 L960.46,262.67 L958.72,260.74 A5.2,5.2 0 1 0 965.18,260.34Z" fill="#fbfbfb" stroke="#808080" stroke-width="1.1" stroke-linejoin="round"/>
<path d="M967.36,291.63 A9.0,9.0 0 1 1 956.18,292.31 L954.44,290.38 L962.20,291.50 L960.46,297.07 L958.72,295.14 A5.2,5.2 0 1 0 965.18,294.74Z" fill="#fbfbfb" stroke="#808080" stroke-width="1.1" stroke-linejoin="round"/>
<circle cx="962.2" cy="299.6" r="3" fill="none" stroke="#777" stroke-width="0.8"/>
<text x="960.5" y="301.7" font-family="'Liberation Sans', sans-serif" font-size="5.8" fill="#555" font-weight="bold" >2</text>
<text x="953.5" y="340.3" font-family="'Liberation Sans', sans-serif" font-size="16" fill="#3a3a3a" font-weight="bold" textLength="17.5" lengthAdjust="spacingAndGlyphs" >Px</text>
<path d="M953.5,372 M956,369.5 v5 M958.3,369.5 v5 M965.5,369.5 v5 M967.8,369.5 v5 M970.1,369.5 v5 M953.5,372 h18" fill="none" stroke="#999" stroke-width="0.8" />
<path d="M953,366.5 h7.5 v10.5 h11" fill="none" stroke="#1a1af0" stroke-width="1.7" />
<text x="963.5" y="367.5" font-family="'Liberation Sans', sans-serif" font-size="9" fill="#222" font-weight="bold" textLength="8" lengthAdjust="spacingAndGlyphs" >%</text>
<text x="957.6" y="411.5" font-family="'Liberation Sans', sans-serif" font-size="20.5" fill="#3a3a3a" font-weight="bold" textLength="11" lengthAdjust="spacingAndGlyphs" >F</text>
<text x="953.5" y="442.5" font-family="'Liberation Sans', sans-serif" font-size="11.5" fill="#3a3a3a" font-weight="bold" textLength="8" lengthAdjust="spacingAndGlyphs" >Y</text>
<line x1="958.5" y1="449" x2="966" y2="432.5" stroke="#3a3a3a" stroke-width="1.5" />
<text x="963.5" y="450" font-family="'Liberation Sans', sans-serif" font-size="11.5" fill="#3a3a3a" font-weight="bold" textLength="8" lengthAdjust="spacingAndGlyphs" >X</text>
<path d="M959,473.5 v-5 c0,-4.6 7.4,-4.6 7.4,0 v5" fill="none" stroke="#2a2a2a" stroke-width="1.9" />
<rect x="957.2" y="473" width="10.8" height="12.5" fill="#2a2a2a" rx="1.2" />
<rect x="959" y="475" width="7.2" height="3.6" fill="#f4f4f4" />
<circle cx="964.6" cy="482.2" r="1.4" fill="#e06018"/>
<circle cx="962.3" cy="509.5" r="8.3" fill="#fbfbfb" stroke="#3a2a20" stroke-width="1.2"/>
<circle cx="962.3" cy="509.5" r="7" fill="none" stroke="#e07030" stroke-width="1.6"/>
<path d="M962.3,504.5 v5 h2.4" fill="none" stroke="#555" stroke-width="1" />
<rect x="955.8" y="535.5" width="12.6" height="17.5" fill="#f2f2f2" stroke="#555" stroke-width="1.1" />
<rect x="958" y="538" width="8.2" height="5" fill="#3a78d8" stroke="#2a4a90" stroke-width="0.6" />
<rect x="958" y="546" width="2" height="2" fill="#d01818" />
<rect x="961.5" y="546" width="4.6" height="2.2" fill="#555" />
<text x="953.6" y="584" font-family="'Liberation Sans', sans-serif" font-size="13" fill="#3a3a3a" font-weight="bold" textLength="17" lengthAdjust="spacingAndGlyphs" >CO</text>
<rect x="981.5" y="80.0" width="292" height="76" fill="none" stroke="#ffffff" stroke-width="1" />
<rect x="980.5" y="79.0" width="292" height="76" fill="none" stroke="#d4d4d4" stroke-width="1" />
<rect x="985" y="74" width="36" height="10" fill="#f0f0f0" />
<text x="987.3" y="84" font-family="'Liberation Sans', sans-serif" font-size="11" fill="#1c1c1c" textLength="31" lengthAdjust="spacingAndGlyphs" >Экран</text>
<text x="988" y="108" font-family="'Liberation Sans', sans-serif" font-size="11" fill="#ff2828" textLength="72.5" lengthAdjust="spacingAndGlyphs" >Текущий кадр</text>
<text x="988" y="138" font-family="'Liberation Sans', sans-serif" font-size="11" fill="#1c1c1c" textLength="67.5" lengthAdjust="spacingAndGlyphs" >Всего кадров</text>
<rect x="1072.3" y="89.3" width="76.2" height="28.4" fill="#fff" stroke="#6a6a6a" stroke-width="1" />
<rect x="1073.5" y="90.5" width="73.8" height="26" fill="none" stroke="#d0d0d0" stroke-width="0.6" />
<text x="1075.6" y="108.6" font-family="'Liberation Serif', serif" font-size="19" fill="#ff1414" font-weight="bold" >1</text>
<rect x="1132.5" y="92.5" width="11.8" height="8.8" fill="#e1e1e1" stroke="#adadad" stroke-width="1" />
<path d="M1134.0,99.10000000000001 L1138.4,94.26 L1142.8000000000002,99.10000000000001Z" fill="#000" />
<rect x="1132.5" y="104.5" width="11.8" height="9.8" fill="#e1e1e1" stroke="#adadad" stroke-width="1" />
<path d="M1134.0,107.2 L1138.4,112.04 L1142.8000000000002,107.2Z" fill="#000" />
<rect x="1072.5" y="122" width="76" height="28.4" fill="#fff" stroke="#e0e0e0" stroke-width="1" />
<text x="1075" y="140.2" font-family="'Liberation Serif', serif" font-size="19" fill="#6c6c6c" font-weight="bold" textLength="29" lengthAdjust="spacingAndGlyphs" >600</text>
<rect x="1132.5" y="125.3" width="11.8" height="8" fill="#e1e1e1" stroke="#adadad" stroke-width="1" />
<path d="M1134.0,131.5 L1138.4,126.66000000000001 L1142.8000000000002,131.5Z" fill="#000" />
<rect x="1132.5" y="136.5" width="11.8" height="9.6" fill="#e1e1e1" stroke="#adadad" stroke-width="1" />
<path d="M1134.0,139.10000000000002 L1138.4,143.94 L1142.8000000000002,139.10000000000002Z" fill="#000" />
<rect x="1153.5" y="95.3" width="41.6" height="16.8" fill="#e1e1e1" stroke="#adadad" stroke-width="1" />
<clipPath id="cb"><rect x="1154.2" y="95.8" width="40.2" height="15.8"/></clipPath>
<text x="1152.6" y="107.4" font-family="'Liberation Sans', sans-serif" font-size="9.5" fill="#222" textLength="44" lengthAdjust="spacingAndGlyphs" clip-path="url(#cb)">Очистить</text>
<rect x="981.5" y="165.5" width="292" height="70.5" fill="none" stroke="#ffffff" stroke-width="1" />
<rect x="980.5" y="164.5" width="292" height="70.5" fill="none" stroke="#d4d4d4" stroke-width="1" />
<rect x="985" y="160" width="81" height="10" fill="#f0f0f0" />
<text x="987.5" y="169.4" font-family="'Liberation Sans', sans-serif" font-size="11" fill="#1c1c1c" textLength="75.5" lengthAdjust="spacingAndGlyphs" >Захват кадров</text>
<circle cx="994.5" cy="184" r="6" fill="#fff" stroke="#333" stroke-width="1"/>
<circle cx="994.5" cy="184" r="3.2" fill="#333"/>
<text x="1003.8" y="188" font-family="'Liberation Sans', sans-serif" font-size="11" fill="#1c1c1c" textLength="16.6" lengthAdjust="spacingAndGlyphs" >Всё</text>
<circle cx="994.5" cy="204" r="6" fill="#fff" stroke="#333" stroke-width="1"/>
<text x="1003.8" y="208" font-family="'Liberation Sans', sans-serif" font-size="11" fill="#1c1c1c" textLength="66.3" lengthAdjust="spacingAndGlyphs" >Ограничение</text>
<rect x="988.5" y="218" width="12" height="12" fill="#fff" stroke="#333" stroke-width="1" />
<path d="M990.8,224 l3,3.2 l5.2,-6.6" fill="none" stroke="#333" stroke-width="1.2" />
<text x="1003.8" y="228" font-family="'Liberation Sans', sans-serif" font-size="11" fill="#1c1c1c" textLength="60.4" lengthAdjust="spacingAndGlyphs" >Циклически</text>
<rect x="1084" y="174" width="1" height="58" fill="#a0a0a0" />
<rect x="1085" y="174" width="1" height="58" fill="#fff" />
<text x="1091.6" y="189.4" font-family="'Liberation Sans', sans-serif" font-size="11" fill="#1c1c1c" >с</text>
<text x="1091.6" y="217.5" font-family="'Liberation Sans', sans-serif" font-size="11" fill="#1c1c1c" textLength="11.3" lengthAdjust="spacingAndGlyphs" >по</text>
<rect x="1116.5" y="175" width="56" height="21" fill="#fff" stroke="#dcdcdc" stroke-width="1" />
<text x="1120" y="188.7" font-family="'Liberation Sans', sans-serif" font-size="11" fill="#8c8c8c" >1</text>
<rect x="1156.5" y="177.9" width="12" height="5.6" fill="#e1e1e1" stroke="#adadad" stroke-width="1" />
<path d="M1158.9,182.50000000000003 L1162.5,178.54000000000002 L1166.1,182.50000000000003Z" fill="#000" />
<rect x="1156.5" y="186.5" width="12" height="6" fill="#e1e1e1" stroke="#adadad" stroke-width="1" />
<path d="M1158.9,187.7 L1162.5,191.66 L1166.1,187.7Z" fill="#000" />
<rect x="1116.5" y="203" width="56" height="21" fill="#fff" stroke="#dcdcdc" stroke-width="1" />
<text x="1118.6" y="215.8" font-family="'Liberation Sans', sans-serif" font-size="11" fill="#8c8c8c" textLength="17.4" lengthAdjust="spacingAndGlyphs" >600</text>
<rect x="1156.5" y="205.9" width="12" height="5.6" fill="#e1e1e1" stroke="#adadad" stroke-width="1" />
<path d="M1158.9,210.50000000000003 L1162.5,206.54000000000002 L1166.1,210.50000000000003Z" fill="#000" />
<rect x="1156.5" y="214.5" width="12" height="6" fill="#e1e1e1" stroke="#adadad" stroke-width="1" />
<path d="M1158.9,215.7 L1162.5,219.66 L1166.1,215.7Z" fill="#000" />
<rect x="983" y="241.4" width="13" height="20" fill="#d6d6d6" />
<rect x="1001" y="241.4" width="13" height="20" fill="#d6d6d6" />
<text x="984" y="255" font-family="'Liberation Sans', sans-serif" font-size="10" fill="#a6acb4" textLength="11" lengthAdjust="spacingAndGlyphs" >&lt;&lt;</text>
<text x="1002" y="255" font-family="'Liberation Sans', sans-serif" font-size="10" fill="#a6acb4" textLength="11" lengthAdjust="spacingAndGlyphs" >&gt;&gt;</text>
<rect x="979" y="239" width="1" height="380" fill="#f8f8f8" />
<rect x="993.5" y="272.3" width="14.2" height="336" fill="#e5e9eb" stroke="#dadada" stroke-width="0.8" />
<rect x="985.6" y="276.2" width="3.8" height="1" fill="#d4d4d4" />
<rect x="985.6" y="286.46999999999997" width="3.8" height="1" fill="#d4d4d4" />
<rect x="985.6" y="296.73999999999995" width="3.8" height="1" fill="#d4d4d4" />
<rect x="985.6" y="307.00999999999993" width="3.8" height="1" fill="#d4d4d4" />
<rect x="985.6" y="317.2799999999999" width="3.8" height="1" fill="#d4d4d4" />
<rect x="985.6" y="327.5499999999999" width="3.8" height="1" fill="#d4d4d4" />
<rect x="985.6" y="337.8199999999999" width="3.8" height="1" fill="#d4d4d4" />
<rect x="985.6" y="348.08999999999986" width="3.8" height="1" fill="#d4d4d4" />
<rect x="985.6" y="358.35999999999984" width="3.8" height="1" fill="#d4d4d4" />
<rect x="985.6" y="368.6299999999998" width="3.8" height="1" fill="#d4d4d4" />
<rect x="985.6" y="378.8999999999998" width="3.8" height="1" fill="#d4d4d4" />
<rect x="985.6" y="389.1699999999998" width="3.8" height="1" fill="#d4d4d4" />
<rect x="985.6" y="399.43999999999977" width="3.8" height="1" fill="#d4d4d4" />
<rect x="985.6" y="409.70999999999975" width="3.8" height="1" fill="#d4d4d4" />
<rect x="985.6" y="419.97999999999973" width="3.8" height="1" fill="#d4d4d4" />
<rect x="985.6" y="430.2499999999997" width="3.8" height="1" fill="#d4d4d4" />
<rect x="985.6" y="440.5199999999997" width="3.8" height="1" fill="#d4d4d4" />
<rect x="985.6" y="450.7899999999997" width="3.8" height="1" fill="#d4d4d4" />
<rect x="985.6" y="461.05999999999966" width="3.8" height="1" fill="#d4d4d4" />
<rect x="985.6" y="471.32999999999964" width="3.8" height="1" fill="#d4d4d4" />
<rect x="985.6" y="481.5999999999996" width="3.8" height="1" fill="#d4d4d4" />
<rect x="985.6" y="491.8699999999996" width="3.8" height="1" fill="#d4d4d4" />
<rect x="985.6" y="502.1399999999996" width="3.8" height="1" fill="#d4d4d4" />
<rect x="985.6" y="512.4099999999996" width="3.8" height="1" fill="#d4d4d4" />
<rect x="985.6" y="522.6799999999996" width="3.8" height="1" fill="#d4d4d4" />
<rect x="985.6" y="532.9499999999996" width="3.8" height="1" fill="#d4d4d4" />
<rect x="985.6" y="543.2199999999996" width="3.8" height="1" fill="#d4d4d4" />
<rect x="985.6" y="553.4899999999996" width="3.8" height="1" fill="#d4d4d4" />
<rect x="985.6" y="563.7599999999995" width="3.8" height="1" fill="#d4d4d4" />
<rect x="985.6" y="574.0299999999995" width="3.8" height="1" fill="#d4d4d4" />
<rect x="985.6" y="584.2999999999995" width="3.8" height="1" fill="#d4d4d4" />
<rect x="985.6" y="594.5699999999995" width="3.8" height="1" fill="#d4d4d4" />
<rect x="985.6" y="604.8399999999995" width="3.8" height="1" fill="#d4d4d4" />
<path d="M992.3,440.8 l2.5,-4.1 h12.9 v8.3 h-12.9Z" fill="#cbcbcb" />
<rect x="1017.25" y="239" width="256.5" height="377" fill="#ffffff" />
<rect x="1017.25" y="239" width="256.5" height="1.3" fill="#84848c" />
<rect x="1017.25" y="239" width="1.2" height="377" fill="#84848c" />
<rect x="1017.25" y="615" width="256.5" height="1.2" fill="#a4a4ac" />
<rect x="1272.8" y="239" width="1.2" height="377" fill="#a4a4ac" />
<rect x="1019.3" y="339.8" width="252.5" height="32.2" fill="#d9d9d9" />
<linearGradient id="gpl2" x1="0" y1="0" x2="1" y2="0.6"><stop offset="0" stop-color="#c4e0a0"/><stop offset="0.45" stop-color="#6e9e3c"/><stop offset="1" stop-color="#3a6418"/></linearGradient>
<path d="M1033.3,242.5 L1051.3,256.7 L1033.3,271Z" fill="url(#gpl2)" stroke="#3a5a1c" stroke-width="1.2" stroke-linejoin="round"/>
<g transform="translate(0,273)">
<path d="M1025.5,9 C1024.5,3.5 1028,0.6 1031.5,0.6 C1034.5,0.6 1036.5,2 1037.8,4 L1051.5,30 L1046,31.8 L1042,24.5 L1039.2,21.8 L1038.4,27.6 L1034.2,28.4 L1031.5,21 Z" fill="#8e8e8e" stroke="#2e2e2e" stroke-width="1.4" stroke-linejoin="round"/>
<path d="M1029.3,5.5 C1030.5,10 1032.5,15 1035.5,20" fill="none" stroke="#dcdcdc" stroke-width="2.4" stroke-linecap="round"/>
<path d="M1034,3.6 L1048.5,30" fill="none" stroke="#5a5a5a" stroke-width="1.8" />
<path d="M1039.3,22 L1041.5,18.5" fill="none" stroke="#444" stroke-width="1" />
<path d="M1034.8,18.6 l3.2,1.6" fill="none" stroke="#0a0a0a" stroke-width="2.4" />
<path d="M1034.6,22 L1035.8,27.6" fill="none" stroke="#c8c8c8" stroke-width="1.2" />
</g>
<g transform="translate(0,306)">
<path d="M1025.5,9 C1024.5,3.5 1028,0.6 1031.5,0.6 C1034.5,0.6 1036.5,2 1037.8,4 L1051.5,30 L1046,31.8 L1042,24.5 L1039.2,21.8 L1038.4,27.6 L1034.2,28.4 L1031.5,21 Z" fill="#8e8e8e" stroke="#2e2e2e" stroke-width="1.4" stroke-linejoin="round"/>
<path d="M1029.3,5.5 C1030.5,10 1032.5,15 1035.5,20" fill="none" stroke="#dcdcdc" stroke-width="2.4" stroke-linecap="round"/>
<path d="M1034,3.6 L1048.5,30" fill="none" stroke="#5a5a5a" stroke-width="1.8" />
<path d="M1039.3,22 L1041.5,18.5" fill="none" stroke="#444" stroke-width="1" />
<path d="M1034.8,18.6 l3.2,1.6" fill="none" stroke="#0a0a0a" stroke-width="2.4" />
<path d="M1034.6,22 L1035.8,27.6" fill="none" stroke="#c8c8c8" stroke-width="1.2" />
</g>
<g>
<rect x="1020" y="340" width="34" height="32" fill="#e4e4e4" />
<path d="M1020,372 l34,-21 M1020,364 l22,-13 M1030,372 l24,-15 M1020,356 l12,-8" fill="none" stroke="#f2f2f2" stroke-width="2" />
<linearGradient id="gpn" x1="0" y1="0" x2="1" y2="0"><stop offset="0" stop-color="#7a7a7a"/><stop offset="0.45" stop-color="#d4d4d4"/><stop offset="1" stop-color="#5a5a5a"/></linearGradient>
<path d="M1023,339.9 L1033.8,339.9 L1036.8,350 L1023.3,353.3Z" fill="url(#gpn)" stroke="#3a3a3a" stroke-width="0.9" />
<path d="M1023.4,353.4 L1036.7,350.2 L1035.3,360.2 L1032.2,361.8Z" fill="#ecb84e" stroke="#7a5a20" stroke-width="0.8" />
<path d="M1032.2,361.8 L1035.3,360.2 L1034.4,363.4Z" fill="#111" />
<path d="M1037,350 L1048.6,366.6 L1034.6,363Z" fill="#f8f8f8" />
<path d="M1036.8,349 L1049,367 L1034,363" fill="none" stroke="#2a2a2a" stroke-width="1.3" stroke-linejoin="round"/>
<path d="M1036.8,348.7 L1054,352.6 L1046.6,349.3 L1054.5,348.8 L1046,346 L1054.5,345.4 L1045,342.7 L1054.5,342.5" fill="none" stroke="#1a1a1a" stroke-width="1.6" stroke-linejoin="round"/>
</g>
<g transform="translate(0,372)">
<path d="M1022.8,27.9 H1038.4 V4.9 H1055" fill="none" stroke="#3a3a3a" stroke-width="3.7" stroke-linejoin="miter"/>
<path d="M1023.2,28.6 H1039.2 V5.5 H1054.6" fill="none" stroke="#9c9c9c" stroke-width="1" />
<path d="M1038.4,6.8 L1046.8,19.4 L1044.2,21.6 L1038.4,15 L1032.6,21.6 L1030,19.4Z" fill="#6a6a6a" stroke="#333" stroke-width="1.1" stroke-linejoin="round"/>
</g>
<g transform="translate(0,405)">
<path d="M1022.8,27.9 H1038.4 V4.9 H1055" fill="none" stroke="#3a3a3a" stroke-width="3.7" stroke-linejoin="miter"/>
<path d="M1023.2,28.6 H1039.2 V5.5 H1054.6" fill="none" stroke="#9c9c9c" stroke-width="1" />
<path d="M1038.4,6.8 L1046.8,19.4 L1044.2,21.6 L1038.4,15 L1032.6,21.6 L1030,19.4Z" fill="#6a6a6a" stroke="#333" stroke-width="1.1" stroke-linejoin="round"/>
</g>
<g transform="translate(0,438)">
<path d="M1022.8,27.9 H1038.4 V4.9 H1055" fill="none" stroke="#3a3a3a" stroke-width="3.7" stroke-linejoin="miter"/>
<path d="M1023.2,28.6 H1039.2 V5.5 H1054.6" fill="none" stroke="#9c9c9c" stroke-width="1" />
<path d="M1038.4,6.8 L1046.8,19.4 L1044.2,21.6 L1038.4,15 L1032.6,21.6 L1030,19.4Z" fill="#6a6a6a" stroke="#333" stroke-width="1.1" stroke-linejoin="round"/>
</g>
<text x="1056.5" y="261" font-family="'Liberation Sans', sans-serif" font-size="11" fill="#1c1c24" textLength="139" lengthAdjust="spacingAndGlyphs" >Внутренняя синхронизация</text>
<text x="1056.5" y="294" font-family="'Liberation Sans', sans-serif" font-size="11" fill="#1c1c24" textLength="123" lengthAdjust="spacingAndGlyphs" >Внешняя синхронизация</text>
<text x="1056.5" y="327" font-family="'Liberation Sans', sans-serif" font-size="11" fill="#1c1c24" textLength="17" lengthAdjust="spacingAndGlyphs" >DIS</text>
<text x="1056.5" y="360" font-family="'Liberation Sans', sans-serif" font-size="11" fill="#1c1c24" textLength="89" lengthAdjust="spacingAndGlyphs" >Самописец 10 сек</text>
<text x="1056.5" y="393" font-family="'Liberation Sans', sans-serif" font-size="11" fill="#1c1c24" textLength="40" lengthAdjust="spacingAndGlyphs" >Канал 1</text>
<text x="1056.5" y="426" font-family="'Liberation Sans', sans-serif" font-size="11" fill="#1c1c24" textLength="40" lengthAdjust="spacingAndGlyphs" >Канал 2</text>
<text x="1056.5" y="459" font-family="'Liberation Sans', sans-serif" font-size="11" fill="#1c1c24" textLength="6" lengthAdjust="spacingAndGlyphs" >4</text>
<rect x="0" y="622.5" width="1280" height="57.5" fill="#f0f0f0" />
<rect x="2.5" y="625.5" width="425" height="51" fill="none" stroke="#d0d0d0" stroke-width="1" />
<rect x="3" y="677" width="425.5" height="1" fill="#fcfcfc" />
<rect x="428" y="626" width="1" height="52" fill="#fcfcfc" />
<text x="5" y="644.3" font-family="'Liberation Sans', sans-serif" font-size="12.5" fill="#1e1e1e" font-weight="bold" textLength="15.6" lengthAdjust="spacingAndGlyphs" >Л1</text>
<text x="114" y="644.3" font-family="'Liberation Sans', sans-serif" font-size="12.5" fill="#1e1e1e" font-weight="bold" textLength="16.6" lengthAdjust="spacingAndGlyphs" >Л2</text>
<rect x="25.8" y="631" width="84" height="18.2" fill="#f0f0f0" />
<rect x="25.8" y="631" width="84" height="1" fill="#a6a6a6" />
<rect x="25.8" y="631" width="1" height="18.2" fill="#a6a6a6" />
<rect x="25.8" y="648.2" width="84" height="1" fill="#ffffff" />
<rect x="108.8" y="631" width="1" height="18.2" fill="#ffffff" />
<text x="46.3" y="644.3000000000001" font-family="'Liberation Sans', sans-serif" font-size="11" fill="#1e1e1e" font-weight="bold" textLength="43" lengthAdjust="spacingAndGlyphs" >520,90°</text>
<rect x="138" y="631" width="84" height="18.2" fill="#f0f0f0" />
<rect x="138" y="631" width="84" height="1" fill="#a6a6a6" />
<rect x="138" y="631" width="1" height="18.2" fill="#a6a6a6" />
<rect x="138" y="648.2" width="84" height="1" fill="#ffffff" />
<rect x="221" y="631" width="1" height="18.2" fill="#ffffff" />
<text x="158.5" y="644.3000000000001" font-family="'Liberation Sans', sans-serif" font-size="11" fill="#1e1e1e" font-weight="bold" textLength="43" lengthAdjust="spacingAndGlyphs" >520,90°</text>
<rect x="236.5" y="631" width="83.5" height="18.2" fill="#f0f0f0" />
<rect x="236.5" y="631" width="83.5" height="1" fill="#a6a6a6" />
<rect x="236.5" y="631" width="1" height="18.2" fill="#a6a6a6" />
<rect x="236.5" y="648.2" width="83.5" height="1" fill="#ffffff" />
<rect x="319.0" y="631" width="1" height="18.2" fill="#ffffff" />
<text x="263.75" y="644.3000000000001" font-family="'Liberation Sans', sans-serif" font-size="11" fill="#1e1e1e" font-weight="bold" textLength="29" lengthAdjust="spacingAndGlyphs" >0,00°</text>
<rect x="25.8" y="655" width="84" height="18.2" fill="#f0f0f0" />
<rect x="25.8" y="655" width="84" height="1" fill="#a6a6a6" />
<rect x="25.8" y="655" width="1" height="18.2" fill="#a6a6a6" />
<rect x="25.8" y="672.2" width="84" height="1" fill="#ffffff" />
<rect x="108.8" y="655" width="1" height="18.2" fill="#ffffff" />
<text x="48.8" y="668.3000000000001" font-family="'Liberation Sans', sans-serif" font-size="11" fill="#1e1e1e" font-weight="bold" textLength="38" lengthAdjust="spacingAndGlyphs" >15,43В</text>
<rect x="138" y="655" width="84" height="18.2" fill="#f0f0f0" />
<rect x="138" y="655" width="84" height="1" fill="#a6a6a6" />
<rect x="138" y="655" width="1" height="18.2" fill="#a6a6a6" />
<rect x="138" y="672.2" width="84" height="1" fill="#ffffff" />
<rect x="221" y="655" width="1" height="18.2" fill="#ffffff" />
<text x="161.0" y="668.3000000000001" font-family="'Liberation Sans', sans-serif" font-size="11" fill="#1e1e1e" font-weight="bold" textLength="38" lengthAdjust="spacingAndGlyphs" >15,43В</text>
<rect x="236.5" y="655" width="83.5" height="18.2" fill="#f0f0f0" />
<rect x="236.5" y="655" width="83.5" height="1" fill="#a6a6a6" />
<rect x="236.5" y="655" width="1" height="18.2" fill="#a6a6a6" />
<rect x="236.5" y="672.2" width="83.5" height="1" fill="#ffffff" />
<rect x="319.0" y="655" width="1" height="18.2" fill="#ffffff" />
<text x="258.75" y="668.3000000000001" font-family="'Liberation Sans', sans-serif" font-size="11" fill="#1e1e1e" font-weight="bold" textLength="39" lengthAdjust="spacingAndGlyphs" >0,00мВ</text>
<rect x="118.6" y="664" width="5.2" height="1.6" fill="#3a3a3a" />
<rect x="226.8" y="661.2" width="8" height="1.5" fill="#3a3a3a" />
<rect x="226.8" y="665.6" width="8" height="1.5" fill="#3a3a3a" />
<rect x="327.6" y="632.4" width="44.599999999999994" height="16.3" fill="#cfe4f7" stroke="#2a7fd4" stroke-width="1.2" />
<text x="347.65" y="646.05" font-family="'Liberation Sans', sans-serif" font-size="11" fill="#1e1e1e" font-weight="bold" textLength="4.5" lengthAdjust="spacingAndGlyphs" >°</text>
<rect x="378.7" y="632.3" width="44.6" height="16.5" fill="#e1e1e1" stroke="#cfcfcf" stroke-width="1" />
<text x="392.0" y="644.55" font-family="'Liberation Sans', sans-serif" font-size="11" fill="#1e1e1e" font-weight="bold" textLength="18" lengthAdjust="spacingAndGlyphs" >сек</text>
<rect x="327.5" y="656.3" width="44.8" height="16.3" fill="#e1e1e1" stroke="#cfcfcf" stroke-width="1" />
<text x="329.65" y="668.4499999999999" font-family="'Liberation Sans', sans-serif" font-size="11" fill="#1e1e1e" font-weight="bold" textLength="40.5" lengthAdjust="spacingAndGlyphs" >об/мин</text>
<rect x="378.7" y="656.3" width="44.6" height="16.3" fill="#e1e1e1" stroke="#cfcfcf" stroke-width="1" />
<text x="394.5" y="668.4499999999999" font-family="'Liberation Sans', sans-serif" font-size="11" fill="#1e1e1e" font-weight="bold" textLength="13" lengthAdjust="spacingAndGlyphs" >Гц</text>
<rect x="1076.4" y="624.4" width="199.4" height="52.6" fill="#f0f0f0" />
<rect x="1076.4" y="624.4" width="199.4" height="1" fill="#b8b8b8" />
<rect x="1076.4" y="624.4" width="1" height="52.6" fill="#b8b8b8" />
<rect x="1076.4" y="676.0" width="199.4" height="1" fill="#ffffff" />
<rect x="1274.8000000000002" y="624.4" width="1" height="52.6" fill="#ffffff" />
<rect x="1137" y="651" width="15.8" height="6" fill="#0a0a0a" />
<rect x="1158.4" y="651" width="15.8" height="6" fill="#0a0a0a" />
<rect x="1179.4" y="651" width="15.8" height="6" fill="#0a0a0a" />
<rect x="1200.2" y="651" width="15.8" height="6" fill="#0a0a0a" />
<text x="1223" y="671.4" font-family="'Liberation Sans', sans-serif" font-size="13" fill="#1a1a1a" font-weight="bold" textLength="49.5" lengthAdjust="spacingAndGlyphs" >об/мин</text>
<rect x="0" y="680" width="1280" height="40" fill="#282523" />
<rect x="16" y="692.3" width="7.6" height="7.6" fill="#ffffff" />
<rect x="24.4" y="692.3" width="7.6" height="7.6" fill="#ffffff" />
<rect x="16" y="700.7" width="7.6" height="7.6" fill="#ffffff" />
<rect x="24.4" y="700.7" width="7.6" height="7.6" fill="#ffffff" />
<rect x="48" y="681" width="287" height="39" fill="#f2f2f2" />
<circle cx="70.8" cy="698.2" r="5.2" fill="none" stroke="#333" stroke-width="1.3"/>
<line x1="67" y1="702.2" x2="61" y2="708.4" stroke="#333" stroke-width="1.4" />
<text x="88" y="706.3" font-family="'Liberation Sans', sans-serif" font-size="15" fill="#444" textLength="43" lengthAdjust="spacingAndGlyphs" >Поиск</text>
<rect x="589" y="680" width="49" height="40" fill="#54504e" />
<rect x="543.4" y="717.6" width="40.6" height="2.4" fill="#7abaf0" />
<rect x="589" y="717.6" width="49" height="2.4" fill="#7abaf0" />
<defs><linearGradient id="ge" x1="0.15" y1="0" x2="0.6" y2="1"><stop offset="0" stop-color="#2cc0ea"/><stop offset="0.45" stop-color="#1a8ee0"/><stop offset="1" stop-color="#1058b8"/></linearGradient><radialGradient id="ge2" cx="0.85" cy="0.45" r="0.6"><stop offset="0" stop-color="#66e060"/><stop offset="0.6" stop-color="#38c8a0" stop-opacity="0.8"/><stop offset="1" stop-color="#2cc0ea" stop-opacity="0"/></radialGradient></defs>
<circle cx="363.4" cy="699.9" r="12.2" fill="url(#ge)"/>
<path d="M355,692 C361,686 372,687 375,696 C376,700 374,703.5 370,704 C366,704 364.5,702 365.5,699.5 C366,697 363,695 360,697 C356,700 356,706 360,710 C353,708 350,699 355,692Z" fill="url(#ge2)" />
<path d="M363,699 C361.5,702.5 364.5,705.8 369.5,705.3 C372.5,705 374.3,703.8 375.6,702.2" fill="none" stroke="#1a2238" stroke-width="2.3" stroke-linecap="round"/>
<circle cx="362.9" cy="699.2" r="2.1" fill="#1a2238"/>
<path d="M402.5,691 h8.5 l1.6,2 h11.6 v3 h-21.7Z" fill="#eeaa18" />
<rect x="402.5" y="693.6" width="21.7" height="14.4" fill="#fcd264" />
<rect x="406" y="701" width="14.6" height="7.8" fill="#3a96e8" />
<rect x="409.6" y="704.2" width="7.4" height="4.6" fill="#fcd264" />
<circle cx="463.3" cy="699.7" r="11.8" fill="#ffffff"/>
<path d="M457.5,691.5 l5.8,9 l5.8,-9 M463.3,700.2 v8.2" fill="none" stroke="#e81818" stroke-width="2.6" stroke-linejoin="round"/>
<rect x="504" y="688.5" width="18" height="23" fill="#5a6a78" rx="1.5" />
<rect x="506.2" y="690.6" width="13.6" height="5.4" fill="#3ab0e8" />
<rect x="506.2" y="698.0" width="3.8" height="3.3" fill="#c8d0d8" />
<rect x="511.0" y="698.0" width="3.8" height="3.3" fill="#c8d0d8" />
<rect x="515.8" y="698.0" width="3.8" height="3.3" fill="#c8d0d8" />
<rect x="506.2" y="702.3" width="3.8" height="3.3" fill="#c8d0d8" />
<rect x="511.0" y="702.3" width="3.8" height="3.3" fill="#c8d0d8" />
<rect x="515.8" y="702.3" width="3.8" height="3.3" fill="#1a5a98" />
<rect x="506.2" y="706.6" width="3.8" height="3.3" fill="#c8d0d8" />
<rect x="511.0" y="706.6" width="3.8" height="3.3" fill="#c8d0d8" />
<rect x="515.8" y="706.6" width="3.8" height="3.3" fill="#1a5a98" />
<circle cx="563" cy="699" r="11.2" fill="#2ea2dc"/>
<path d="M555.5,699.2 l14,-5.6 l-2.4,11.4 l-4,-3 l-2.2,2.2 l-0.4,-3.4 l6,-5.4 l-7.4,4.6Z" fill="#ffffff" />
<rect x="563" y="703" width="14.6" height="11" fill="#e83a3a" rx="2" />
<text x="566.2" y="712" font-family="'Liberation Sans', sans-serif" font-size="8.5" fill="#ffb0b0" textLength="9.5" lengthAdjust="spacingAndGlyphs" >63</text>
<circle cx="564.8" cy="710.6" r="0.6" fill="#ffb0b0"/>
<circle cx="611.8" cy="697.2" r="7.3" fill="none" stroke="#fff" stroke-width="3" stroke-dasharray="2.9 2.83"/>
<circle cx="611.8" cy="697.2" r="5" fill="none" stroke="#fff" stroke-width="2.2"/>
<circle cx="611.8" cy="697.2" r="1.5" fill="#fff"/>
<rect x="601" y="700.6" width="22" height="11" fill="#54504e" />
<text x="602.4" y="710.2" font-family="'Liberation Sans', sans-serif" font-size="12" fill="#ffffff" font-weight="bold" textLength="18.8" lengthAdjust="spacingAndGlyphs" stroke="#fff" stroke-width="0.5">MD3</text>
<path d="M1038,703 l5.8,-5.8 l5.8,5.8" fill="none" stroke="#f0f0f0" stroke-width="1.3" />
<rect x="1060" y="695.6" width="15.4" height="8.6" fill="#ffffff" stroke="#ffffff" stroke-width="0.6" />
<rect x="1076" y="698" width="1.4" height="3.6" fill="#fff" />
<rect x="1061.2" y="696.8" width="13" height="6.2" fill="none" stroke="#222" stroke-width="0.5" />
<path d="M1095.0,706.5 A3.5,3.5 0 0 1 1098.5,703.0" fill="none" stroke="#fff" stroke-width="1.2" opacity="1"/>
<path d="M1091.7,706.5 A6.8,6.8 0 0 1 1098.5,699.7" fill="none" stroke="#fff" stroke-width="1.2" opacity="0.85"/>
<path d="M1088.3,706.5 A10.2,10.2 0 0 1 1098.5,696.3" fill="none" stroke="#fff" stroke-width="1.2" opacity="0.6"/>
<path d="M1085.1,706.5 A13.4,13.4 0 0 1 1098.5,693.1" fill="none" stroke="#fff" stroke-width="1.2" opacity="0.4"/>
<circle cx="1098" cy="706.3" r="1.2" fill="#fff"/>
<path d="M1109.6,697.4 h2.8 l4,-3.8 v12.8 l-4,-3.8 h-2.8Z" fill="none" stroke="#fff" stroke-width="1.1" />
<path d="M1118.6,697 c1.6,1.6 1.6,4.4 0,6 M1120.8,695 c2.6,2.8 2.6,7.2 0,10" fill="none" stroke="#aaa" stroke-width="0.9" />
<text x="1135.5" y="704.6" font-family="'Liberation Sans', sans-serif" font-size="11.5" fill="#ffffff" textLength="21" lengthAdjust="spacingAndGlyphs" >РУС</text>
<text x="1181" y="695.8" font-family="'Liberation Sans', sans-serif" font-size="11.5" fill="#ffffff" textLength="28.4" lengthAdjust="spacingAndGlyphs" >19:05</text>
<text x="1171.6" y="714" font-family="'Liberation Sans', sans-serif" font-size="11.5" fill="#ffffff" textLength="48" lengthAdjust="spacingAndGlyphs" >16/06/23</text>
<path d="M1238.5,693 h17 v12 h-8.5 l-3,3.2 v-3.2 h-5.5Z" fill="#ffffff" />
<line x1="1241" y1="697" x2="1253" y2="697" stroke="#222" stroke-width="1" />
<line x1="1241" y1="699.8" x2="1253" y2="699.8" stroke="#222" stroke-width="1" />
<line x1="1241" y1="702.6" x2="1249" y2="702.6" stroke="#222" stroke-width="1" />
<circle cx="1254.3" cy="708" r="7.6" fill="#282523" stroke="#6a6a6a" stroke-width="1"/>
<text x="1251.6" y="712.3" font-family="'Liberation Sans', sans-serif" font-size="11.5" fill="#ffffff" font-weight="bold" >1</text>
</svg>
</body></html>
